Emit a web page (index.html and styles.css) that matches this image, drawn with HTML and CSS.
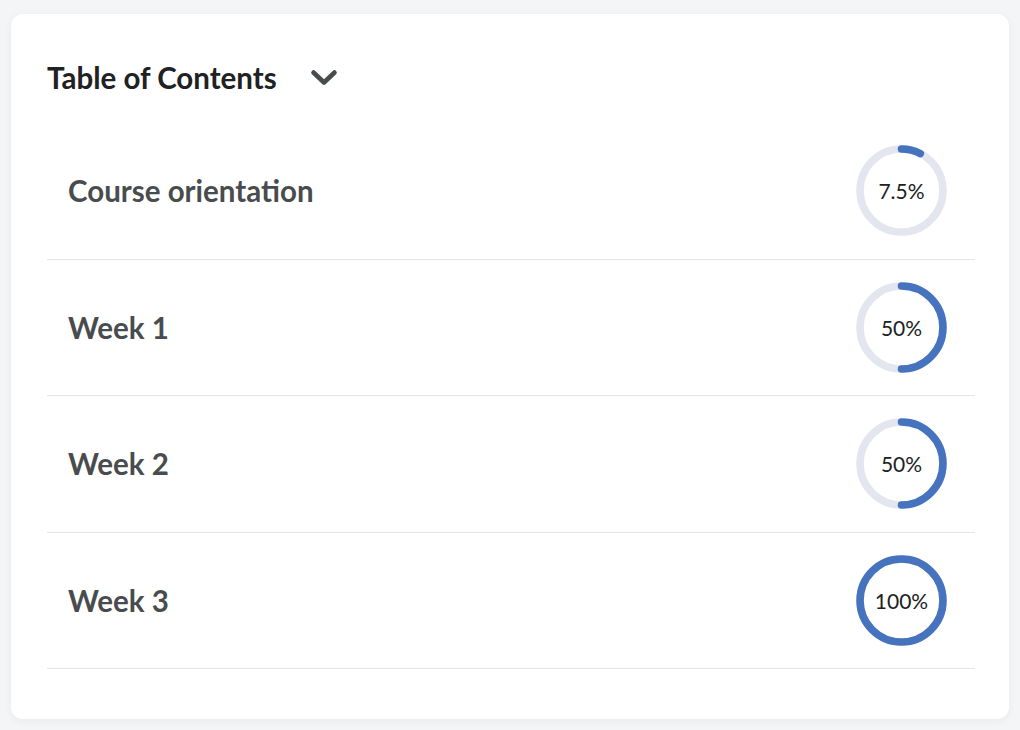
FILE: index.html
```html
<!DOCTYPE html>
<html lang="en">
<head>
<meta charset="utf-8">
<title>Table of Contents</title>
<link rel="stylesheet" href="styles.css">
</head>
<body>
<main class="card">
  <header class="toc-header">
    <h2 class="toc-title">Table of Contents</h2>
    <button class="toggle" aria-label="Collapse">
      <svg width="28" height="18" viewBox="0 0 28 18" aria-hidden="true"><path d="M3.5 3.5 L14 13.5 L24.5 3.5" fill="none" stroke="#494c4e" stroke-width="4.6" stroke-linecap="round" stroke-linejoin="round"/></svg>
    </button>
  </header>
  <ul class="toc-list">
    <li class="toc-row">
      <span class="toc-name">Course orientation</span>
      <span class="ring">
        <svg viewBox="0 0 90 90" width="91" height="91"><circle class="track" cx="45" cy="45" r="41"/><circle class="bar" cx="45" cy="45" r="41" pathLength="100" stroke-dasharray="7.5 100"/></svg>
        <span class="ring-label">7.5%</span>
      </span>
    </li>
    <li class="toc-row">
      <span class="toc-name">Week 1</span>
      <span class="ring">
        <svg viewBox="0 0 90 90" width="91" height="91"><circle class="track" cx="45" cy="45" r="41"/><circle class="bar" cx="45" cy="45" r="41" pathLength="100" stroke-dasharray="50 100"/></svg>
        <span class="ring-label">50%</span>
      </span>
    </li>
    <li class="toc-row">
      <span class="toc-name">Week 2</span>
      <span class="ring">
        <svg viewBox="0 0 90 90" width="91" height="91"><circle class="track" cx="45" cy="45" r="41"/><circle class="bar" cx="45" cy="45" r="41" pathLength="100" stroke-dasharray="50 100"/></svg>
        <span class="ring-label">50%</span>
      </span>
    </li>
    <li class="toc-row">
      <span class="toc-name">Week 3</span>
      <span class="ring">
        <svg viewBox="0 0 90 90" width="91" height="91"><circle class="track" cx="45" cy="45" r="41"/><circle class="bar full" cx="45" cy="45" r="41"/></svg>
        <span class="ring-label">100%</span>
      </span>
    </li>
  </ul>
</main>
</body>
</html>
```

FILE: styles.css
```css
* { box-sizing: border-box; }
html, body { margin: 0; padding: 0; }
body {
  background: #f4f5f7;
  font-family: Lato, "Noto Sans", "Liberation Sans", sans-serif;
  padding: 14px 11px 11px 11px;
  height: 730px;
}
.card {
  background: #fff;
  border-radius: 12px;
  box-shadow: 0 2px 8px rgba(20, 30, 50, 0.05);
  height: 705px;
  padding: 44px 34px 0 36px;
}
.toc-header {
  display: flex;
  align-items: center;
  height: 38px;
}
.toc-title {
  margin: 0;
  font-size: 29.5px;
  font-weight: 700;
  color: #202122;
  letter-spacing: 0;
}
.toggle {
  border: 0;
  background: none;
  padding: 0;
  margin-left: 33px;
  margin-top: 2px;
  display: flex;
}
.toc-list {
  list-style: none;
  margin: 27px 0 0 0;
  padding: 0;
}
.toc-row {
  display: flex;
  align-items: center;
  justify-content: space-between;
  height: 136.5px;
  border-bottom: 1px solid #e3e5e9;
  padding: 0 28px 0 21px;
}
.toc-name {
  font-size: 29.5px;
  font-weight: 700;
  color: #494c4e;
}
.ring {
  position: relative;
  width: 91px;
  height: 91px;
  display: flex;
  align-items: center;
  justify-content: center;
}
.ring svg {
  position: absolute;
  inset: 0;
  transform: rotate(-90deg);
}
.track {
  fill: none;
  stroke: #e3e6ef;
  stroke-width: 7.5;
}
.bar {
  fill: none;
  stroke: #4573bd;
  stroke-width: 7.5;
  stroke-linecap: round;
}
.bar.full { stroke-linecap: butt; }
.ring-label {
  position: relative;
  font-size: 21px;
  color: #202122;
}
```
